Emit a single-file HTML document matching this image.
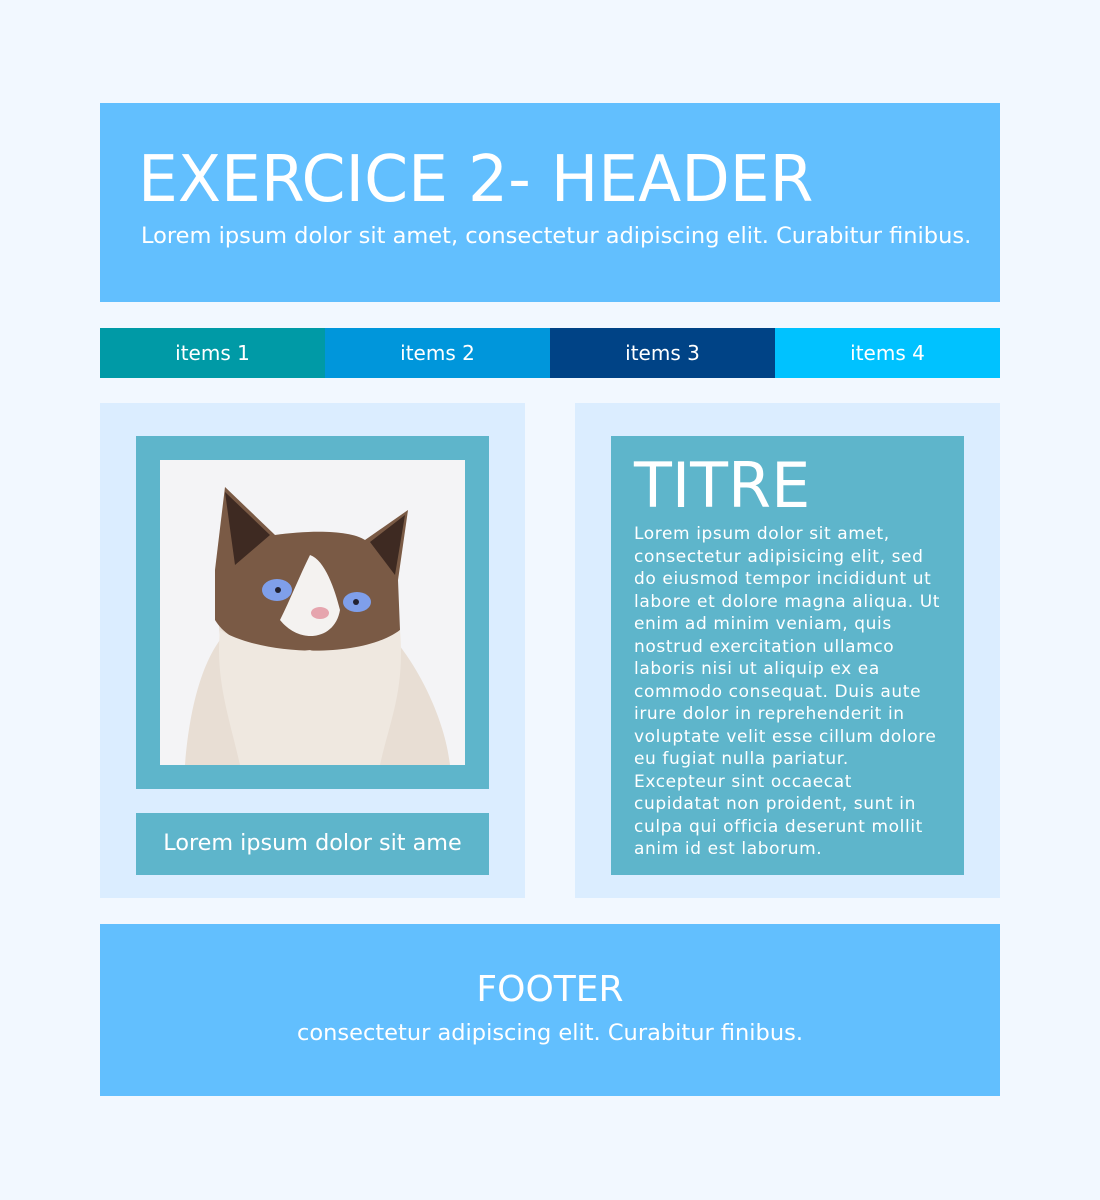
<!DOCTYPE html>
<html><head><meta charset="utf-8"><style>
*{margin:0;padding:0;box-sizing:border-box}
body{width:1100px;height:1200px;background:#f2f8ff;font-family:"DejaVu Sans","Liberation Sans",sans-serif;color:#fff;position:relative;overflow:hidden}
.abs{position:absolute}
#hdr{left:100px;top:103px;width:900px;height:199px;background:#62bffe}
#hdr h1{position:absolute;left:38px;top:40px;font-weight:normal;font-size:64px;white-space:nowrap;transform:scaleX(0.985);transform-origin:left}
#hdr p{position:absolute;left:41px;top:120px;font-size:22.5px;white-space:nowrap}
.nav{top:328px;height:50px;width:225px;text-align:center;line-height:50px;font-size:20px}
.panel{top:403px;height:495px;width:425px;background:#dbedff}
.box{background:#5eb5cb}
</style></head><body>
<div id="hdr" class="abs"><h1>EXERCICE 2- HEADER</h1><p>Lorem ipsum dolor sit amet, consectetur adipiscing elit. Curabitur finibus.</p></div>
<div class="abs nav" style="left:100px;background:#009aa6">items 1</div>
<div class="abs nav" style="left:325px;background:#0096db">items 2</div>
<div class="abs nav" style="left:550px;background:#004386">items 3</div>
<div class="abs nav" style="left:775px;background:#00c2ff">items 4</div>
<div class="abs panel" style="left:100px"></div>
<div class="abs panel" style="left:575px"></div>
<div class="abs box" style="left:136px;top:436px;width:353px;height:353px"></div>
<svg class="abs" style="left:160px;top:460px" width="305" height="305" viewBox="0 0 305 305">
<rect width="305" height="305" fill="#f4f4f6"/>
<path d="M25 305 C30 240 45 200 60 180 L55 110 L65 27 L115 75 C150 70 190 70 205 80 L248 50 L238 120 L235 180 C260 210 285 260 290 305Z" fill="#e8ded4"/>
<path d="M55 110 L65 27 L115 75 C150 70 190 70 205 80 L248 50 L238 120 L240 170 C220 190 180 200 150 190 C110 195 70 185 55 160Z" fill="#7a5a45"/>
<path d="M65 32 L110 75 L75 105Z M245 55 L210 82 L235 115Z" fill="#3e2a22"/>
<path d="M150 95 C165 100 175 130 180 150 C175 180 140 185 120 160 C130 140 140 115 150 95Z" fill="#f4f2f0"/>
<path d="M60 170 C100 195 200 200 240 170 C245 230 230 260 220 305 L80 305 C70 260 55 220 60 170Z" fill="#efe8e0"/>
<ellipse cx="117" cy="130" rx="15" ry="11" fill="#7f9fea"/>
<ellipse cx="197" cy="142" rx="14" ry="10" fill="#7f9fea"/>
<circle cx="118" cy="130" r="3" fill="#223"/><circle cx="196" cy="142" r="3" fill="#223"/>
<ellipse cx="160" cy="153" rx="9" ry="6" fill="#e6a5ae"/>
</svg>
<div class="abs box" style="left:136px;top:813px;width:353px;height:62px;text-align:center;line-height:60px;font-size:22.3px">Lorem ipsum dolor sit ame</div>
<div class="abs box" style="left:611px;top:436px;width:353px;height:439px;padding:14px 0 0 23px">
<div style="font-size:62px;line-height:72px">TITRE</div>
<div style="font-size:17px;line-height:22.5px;letter-spacing:0.6px;margin-top:1px;width:307px">Lorem ipsum dolor sit amet, consectetur adipisicing elit, sed do eiusmod tempor incididunt ut labore et dolore magna aliqua. Ut enim ad minim veniam, quis nostrud exercitation ullamco laboris nisi ut aliquip ex ea commodo consequat. Duis aute irure dolor in reprehenderit in voluptate velit esse cillum dolore eu fugiat nulla pariatur. Excepteur sint occaecat cupidatat non proident, sunt in culpa qui officia deserunt mollit anim id est laborum.</div>
</div>
<div class="abs" style="left:100px;top:924px;width:900px;height:172px;background:#62bffe;text-align:center">
<div style="margin-top:44px;font-size:36px;line-height:44px">FOOTER</div>
<div style="font-size:22.5px;line-height:30px;margin-top:6px;white-space:nowrap">consectetur adipiscing elit. Curabitur finibus.</div>
</div>
</body></html>
